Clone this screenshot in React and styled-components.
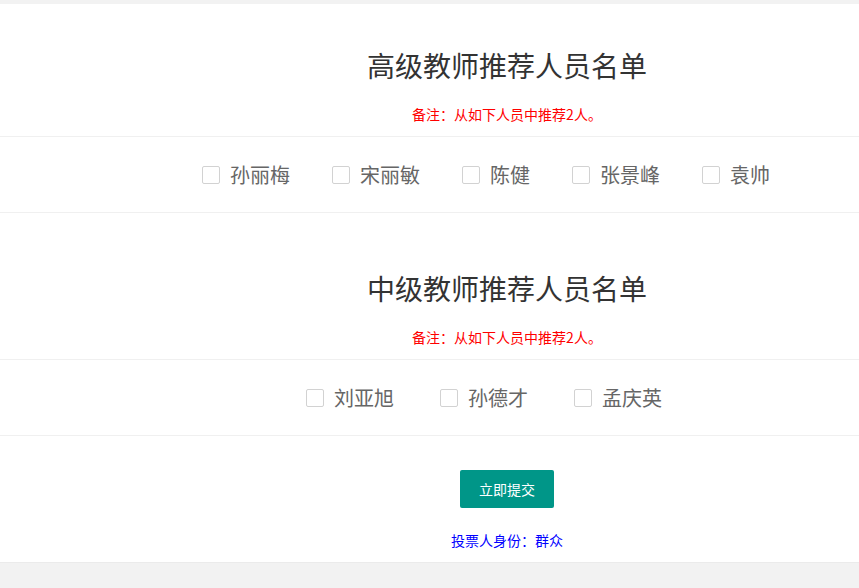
import React from "react";
import styled, { createGlobalStyle } from "styled-components";

const groups = [
  {
    title: "高级教师推荐人员名单",
    note: "备注：从如下人员中推荐2人。",
    names: ["孙丽梅", "宋丽敏", "陈健", "张景峰", "袁帅"],
    spacing: 42,
  },
  {
    title: "中级教师推荐人员名单",
    note: "备注：从如下人员中推荐2人。",
    names: ["刘亚旭", "孙德才", "孟庆英"],
    spacing: 46,
  },
];

const GlobalStyle = createGlobalStyle`
  html, body {
    margin: 0;
    padding: 0;
    overflow: hidden;
    background: #f2f2f2;
    font-family: "Noto Sans CJK SC", "Noto Sans", sans-serif;
  }
`;

function App() {
  return (
    <>
      <GlobalStyle />
      <Page>
        <Panel>
          {groups.map((g, idx) => (
            <Section key={idx}>
              <Title>{g.title}</Title>
              <Note>{g.note}</Note>
              <NameRow>
                {g.names.map((name) => (
                  <Choice key={name} $spacing={g.spacing}>
                    <Box />
                    <Name>{name}</Name>
                  </Choice>
                ))}
              </NameRow>
            </Section>
          ))}
          <Footer>
            <SubmitBtn>立即提交</SubmitBtn>
            <Identity>投票人身份：群众</Identity>
          </Footer>
        </Panel>
      </Page>
    </>
  );
}

const Page = styled.div`
  min-height: 588px;
  padding-top: 4px;
  background: #f2f2f2;
`;

const Panel = styled.div`
  background: #fff;
  padding-bottom: 12px;
  border-bottom: 1px solid #ebebeb;
`;

const Section = styled.section`
  display: flex;
  flex-direction: column;
  align-items: center;
  padding-top: 40px;

  & + & {
    margin-top: 14px;
  }
`;

const Title = styled.h2`
  margin: 0;
  padding-left: 155px;
  font-size: 28px;
  font-weight: 400;
  line-height: 42px;
  color: #333;
`;

const Note = styled.div`
  margin: 18px 0 12px;
  padding-left: 155px;
  font-size: 14px;
  line-height: 20px;
  color: #ff0000;
`;

const NameRow = styled.div`
  align-self: stretch;
  display: flex;
  justify-content: center;
  align-items: center;
  height: 75px;
  padding-left: 155px;
  border-top: 1px solid #f0f0f0;
  border-bottom: 1px solid #f0f0f0;
`;

const Choice = styled.label`
  display: flex;
  align-items: center;
  margin-right: ${(p) => p.$spacing}px;
  cursor: pointer;
`;

const Box = styled.span`
  width: 16px;
  height: 16px;
  border: 1px solid #d2d2d2;
  border-radius: 2px;
  background: #fff;
`;

const Name = styled.span`
  margin-left: 10px;
  font-size: 20px;
  line-height: 28px;
  color: #666;
`;

const Footer = styled.div`
  display: flex;
  flex-direction: column;
  align-items: center;
  padding-top: 34px;
  padding-left: 155px;
`;

const SubmitBtn = styled.button`
  width: 94px;
  height: 38px;
  border: none;
  border-radius: 2px;
  background: #009688;
  color: #fff;
  font-family: inherit;
  font-size: 14px;
  cursor: pointer;
`;

const Identity = styled.div`
  margin-top: 22px;
  font-size: 14px;
  line-height: 20px;
  color: #0000ff;
`;

export default App;
